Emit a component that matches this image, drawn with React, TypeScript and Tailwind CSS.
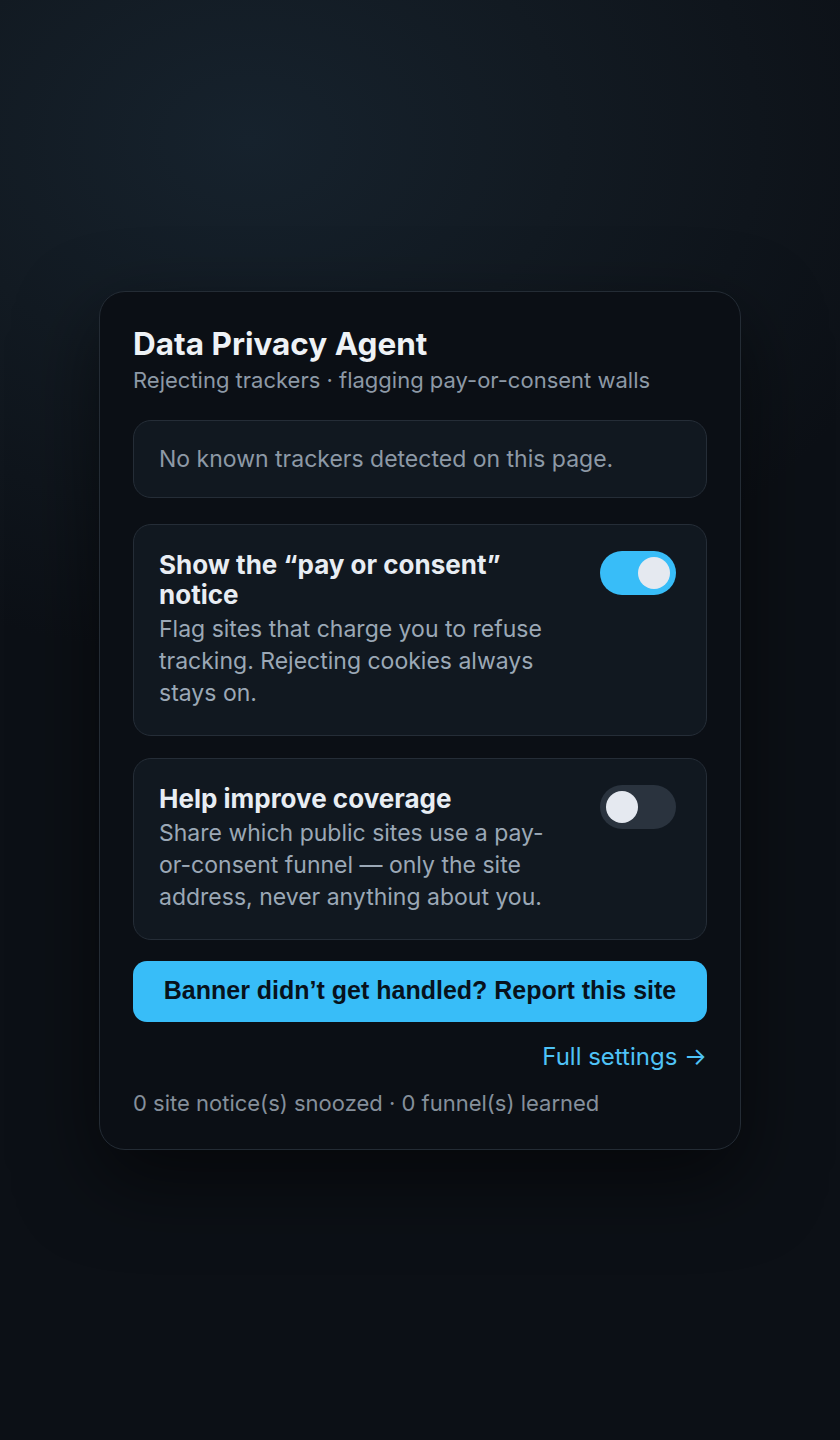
import { useState } from "react";

const Toggle = ({ on, onClick }: { on: boolean; onClick: () => void }) => (
  <button
    onClick={onClick}
    className={
      "relative mt-[1px] mr-[5px] h-[44px] w-[76px] shrink-0 rounded-full transition-colors " +
      (on ? "bg-[#38bdf8]" : "bg-[#2a333e]")
    }
  >
    <span
      className={
        "absolute top-[6px] h-[32px] w-[32px] rounded-full bg-[#e5e9f0] transition-all " +
        (on ? "left-[38px]" : "left-[6px]")
      }
    />
  </button>
);

const SettingRow = ({
  title,
  desc,
  on,
  onToggle,
}: {
  title: string;
  desc: string;
  on: boolean;
  onToggle: () => void;
}) => (
  <div className="flex items-start gap-10 rounded-[18px] border border-[#252d37] bg-[#111820] px-[25px] pt-[25px] pb-[26px]">
    <div className="flex-1">
      <h3 className="text-[26px] font-bold leading-[30px] text-[#e8edf3]">{title}</h3>
      <p className="mt-[3px] text-[23px] leading-[32px] text-[#9ba8b6]">{desc}</p>
    </div>
    <Toggle on={on} onClick={onToggle} />
  </div>
);

export default function App() {
  const [showNotice, setShowNotice] = useState(true);
  const [helpCoverage, setHelpCoverage] = useState(false);

  return (
    <div
      className="flex min-h-[1440px] items-center justify-center bg-[#0c1016] bg-[radial-gradient(ellipse_700px_520px_at_250px_140px,#16222d_0%,#121a22_45%,#0c1016_100%)]"
      style={{ fontFamily: "Inter, 'Noto Sans', sans-serif" }}
    >
      <div className="w-[642px] rounded-[26px] border border-[#242c35] bg-[#0b0f15] px-[33px] pt-[32px] pb-[32px] shadow-[0_30px_80px_rgba(0,0,0,0.55)]">
        <h1 className="text-[31.5px] font-bold leading-[40px] text-[#eef2f6]">Data Privacy Agent</h1>
        <p className="mt-[2px] text-[22px] leading-[28px] text-[#8d99a6]">
          Rejecting trackers · flagging pay-or-consent walls
        </p>

        <div className="mt-[26px] flex flex-col">
          <div className="rounded-[18px] border border-[#252d37] bg-[#111820] px-[25px] py-[24px] text-[23px] leading-[28px] text-[#8d99a6]">
            No known trackers detected on this page.
          </div>

          <div className="mt-[26px]">
            <SettingRow
              title="Show the “pay or consent” notice"
              desc="Flag sites that charge you to refuse tracking. Rejecting cookies always stays on."
              on={showNotice}
              onToggle={() => setShowNotice((v) => !v)}
            />
          </div>

          <div className="mt-[22px]">
            <SettingRow
              title="Help improve coverage"
              desc="Share which public sites use a pay-or-consent funnel — only the site address, never anything about you."
              on={helpCoverage}
              onToggle={() => setHelpCoverage((v) => !v)}
            />
          </div>
        </div>

        <button
          className="mt-[21px] h-[61px] w-full rounded-[14px] bg-[#38bdf8] text-[25px] font-bold text-[#07121c]"
          style={{ fontFamily: "'Liberation Sans', Arial, sans-serif" }}
        >
          Banner didn’t get handled? Report this site
        </button>

        <div className="mt-[20px] flex justify-end">
          <a href="#" className="text-[24px] leading-[30px] text-[#4fc3f7]">
            Full settings →
          </a>
        </div>

        <p className="mt-[17px] text-[22px] leading-[28px] text-[#858f9b]">
          0 site notice(s) snoozed · 0 funnel(s) learned
        </p>
      </div>
    </div>
  );
}
